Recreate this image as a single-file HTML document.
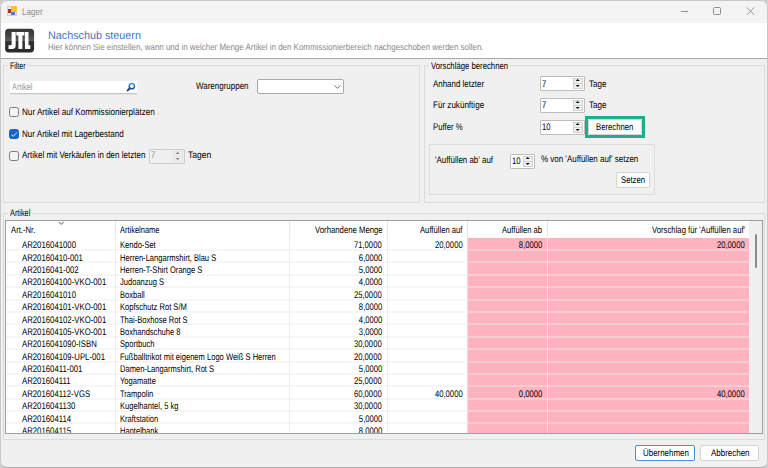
<!DOCTYPE html>
<html><head><meta charset="utf-8"><style>
*{margin:0;padding:0;box-sizing:border-box}
html,body{width:768px;height:468px;overflow:hidden;background:#cdcdcd}
body{font-family:"Liberation Sans",sans-serif;font-size:8.5px;color:#000;position:relative;text-rendering:geometricPrecision}
.a{position:absolute}
.x{position:absolute;white-space:nowrap;line-height:12px;height:12px}
.win{left:0;top:0;width:768px;height:468px;background:#f0f0f0;border-radius:7px;overflow:hidden}
.frame{position:absolute;left:0;top:0;width:768px;height:468px;border:1px solid #c8c8c8;border-bottom-color:#acacac;border-radius:7px}
.win>.a:first-child{}
.gb{position:absolute;border:1px solid #dcdcdc}
.nud{position:absolute;background:#fff;border:1px solid #b9b9b9}
.spin{position:absolute;top:1px;bottom:1px;right:1px;width:10px;background:#ececec;border-left:1px solid #d0d0d0}
.spin i{position:absolute;left:0;right:0;height:50%;}
.spin i.u{top:0;border-bottom:1px solid #d0d0d0}
.spin i.d{bottom:0}
.spin i:after{content:"";position:absolute;left:3px;border-left:2px solid transparent;border-right:2px solid transparent}
.spin i.u:after{top:2px;border-bottom:2px solid #222}
.spin i.d:after{top:2px;border-top:2px solid #222}
.btn{position:absolute;background:#fdfdfd;border:1px solid #d4d4d4;border-radius:2px}
.cb{position:absolute;width:10px;height:10px;border:1px solid #7c7c7c;border-radius:2.5px;background:#f4f4f4}
</style></head><body>
<div class="a win">
<div class="a" style="left:0;top:0;width:768px;height:23px;background:#f3f3f3"></div>
<div class="a" style="left:7px;top:6px;width:10px;height:10px;background:#ececec;border:1px solid #d0d0d0"></div>
<div class="a" style="left:8px;top:9px;width:3px;height:4px;background:#c0272d"></div>
<div class="a" style="left:11px;top:6px;width:6px;height:6px;background:#f2c230;border-radius:1px"></div>
<div class="a" style="left:11px;top:12px;width:4px;height:3px;background:#3f7fe0"></div>
<div class="a" style="left:681px;top:11px;width:7px;height:1px;background:#8e8e8e"></div>
<div class="a" style="left:713px;top:7px;width:8px;height:8px;border:1px solid #8e8e8e;border-radius:1.5px"></div>
<svg class="a" style="left:746px;top:7px" width="9" height="9" viewBox="0 0 9 9"><path d="M0.7 0.4L8.3 8M8.3 0.4L0.7 8" stroke="#929292" stroke-width="0.95"/></svg>
<div class="a" style="left:0;top:23px;width:768px;height:36px;background:#fff;border-bottom:1px solid #a9a9a9"></div>
<svg class="a" style="left:5px;top:28px" width="30" height="25" viewBox="0 0 30 25">
<defs><linearGradient id="g" x1="0" y1="0" x2="0" y2="1"><stop offset="0" stop-color="#353535"/><stop offset="0.3" stop-color="#454545"/><stop offset="0.5" stop-color="#5c5c5c"/><stop offset="0.52" stop-color="#333"/><stop offset="1" stop-color="#2a2a2a"/></linearGradient></defs>
<rect x="0.1" y="0.8" width="29" height="23.6" rx="3.6" fill="url(#g)"/>
<path d="M6.6 3.9H10.7V17.3Q10.7 21.1 7.2 21.1H3.5V17.3H5.8Q6.6 17.3 6.6 16.5Z" fill="#fff"/>
<path d="M11.3 3.9H19.4V7.6H17.4V21.1H13.4V7.6H11.3Z" fill="#fff"/>
<path d="M19.9 3.9H23.5V17.3H25.3V21.1H19.9Z" fill="#fff"/>
</svg>
<div class="gb" style="left:3px;top:65px;width:417px;height:138px"></div>
<div class="a" style="left:8px;top:62px;width:19px;height:6px;background:#f0f0f0"></div>
<div class="a" style="left:10px;top:81px;width:127px;height:12px;background:#fff;box-shadow:0 1px 0 #c6c6c6, 0 2px 0 #e2e2e2"></div>
<svg class="a" style="left:126px;top:82px" width="10" height="10" viewBox="0 0 10 10"><defs><linearGradient id="mg" x1="0" y1="0" x2="0" y2="1"><stop offset="0" stop-color="#3fa0e0"/><stop offset="1" stop-color="#1d4f9e"/></linearGradient></defs><circle cx="5.8" cy="4.2" r="2.6" fill="none" stroke="url(#mg)" stroke-width="1.5"/><path d="M3.9 6.2L1.6 8.5" stroke="#26407f" stroke-width="1.9" stroke-linecap="round"/></svg>
<div class="a" style="left:257px;top:79px;width:87px;height:15px;background:#fff;border:1px solid #a8a8a8;border-radius:2px"></div>
<svg class="a" style="left:334px;top:85px" width="7" height="4" viewBox="0 0 7 4"><path d="M0.5 0.5L3.5 3.2L6.5 0.5" fill="none" stroke="#606060" stroke-width="0.9"/></svg>
<div class="cb" style="left:9px;top:107px"></div>
<div class="cb" style="left:9px;top:129px;background:#1766c6;border-color:#1766c6"></div>
<svg class="a" style="left:10px;top:131px" width="8" height="7" viewBox="0 0 8 7"><path d="M1.5 3.7L3.3 5.3L6.9 1.6" fill="none" stroke="#fff" stroke-width="0.9"/></svg>
<div class="cb" style="left:9px;top:151px"></div>
<div class="a" style="left:149px;top:149px;width:36px;height:15px;background:#f0f0f0;border:1px solid #cccccc;border-radius:1px"></div>
<div class="a" style="left:173px;top:151px;width:10px;height:11px;background:#efefef;border:1px solid #e2e2e2"></div>
<div class="a" style="left:173px;top:156px;width:10px;height:1px;background:#e2e2e2"></div>
<svg class="a" style="left:173px;top:151px" width="10" height="11" viewBox="0 0 10 11"><path d="M2.6 3.1H6.8L4.7 1Z M2.6 6.9H6.8L4.7 9Z" fill="#808080"/></svg>
<div class="gb" style="left:424px;top:65px;width:341px;height:138px"></div>
<div class="a" style="left:429px;top:62px;width:80px;height:6px;background:#f0f0f0"></div>
<div class="a" style="left:540px;top:76px;width:45px;height:15px;background:#fff;border:1px solid #bdbdbd;border-radius:1px"></div>
<div class="a" style="left:573px;top:78px;width:10px;height:11px;background:#efefef;border:1px solid #d2d2d2"></div>
<div class="a" style="left:573px;top:83px;width:10px;height:1px;background:#d2d2d2"></div>
<svg class="a" style="left:573px;top:78px" width="10" height="11" viewBox="0 0 10 11"><path d="M2.6 3.1H6.8L4.7 1Z M2.6 6.9H6.8L4.7 9Z" fill="#111"/></svg>
<div class="a" style="left:540px;top:98px;width:45px;height:15px;background:#fff;border:1px solid #bdbdbd;border-radius:1px"></div>
<div class="a" style="left:573px;top:100px;width:10px;height:11px;background:#efefef;border:1px solid #d2d2d2"></div>
<div class="a" style="left:573px;top:105px;width:10px;height:1px;background:#d2d2d2"></div>
<svg class="a" style="left:573px;top:100px" width="10" height="11" viewBox="0 0 10 11"><path d="M2.6 3.1H6.8L4.7 1Z M2.6 6.9H6.8L4.7 9Z" fill="#111"/></svg>
<div class="a" style="left:540px;top:120px;width:45px;height:15px;background:#fff;border:1px solid #bdbdbd;border-radius:1px"></div>
<div class="a" style="left:573px;top:122px;width:10px;height:11px;background:#efefef;border:1px solid #d2d2d2"></div>
<div class="a" style="left:573px;top:127px;width:10px;height:1px;background:#d2d2d2"></div>
<svg class="a" style="left:573px;top:122px" width="10" height="11" viewBox="0 0 10 11"><path d="M2.6 3.1H6.8L4.7 1Z M2.6 6.9H6.8L4.7 9Z" fill="#111"/></svg>
<div class="a" style="left:585px;top:116px;width:60px;height:22px;border:3px solid #1daf8c"></div>
<div class="btn" style="left:588px;top:119px;width:54px;height:16px"></div>
<div class="gb" style="left:429px;top:144px;width:226px;height:51px"></div>
<div class="a" style="left:510px;top:154px;width:25px;height:15px;background:#fff;border:1px solid #bdbdbd;border-radius:1px"></div>
<div class="a" style="left:523px;top:156px;width:10px;height:11px;background:#efefef;border:1px solid #d2d2d2"></div>
<div class="a" style="left:523px;top:161px;width:10px;height:1px;background:#d2d2d2"></div>
<svg class="a" style="left:523px;top:156px" width="10" height="11" viewBox="0 0 10 11"><path d="M2.6 3.1H6.8L4.7 1Z M2.6 6.9H6.8L4.7 9Z" fill="#111"/></svg>
<div class="btn" style="left:616px;top:172px;width:34px;height:16px"></div>
<div class="gb" style="left:3px;top:213px;width:762px;height:227px"></div>
<div class="a" style="left:8px;top:210px;width:24px;height:6px;background:#f0f0f0"></div>
<div class="a" style="left:5px;top:220px;width:758px;height:214px;background:#fff;border:1px solid #9a9ea5"></div>
<div class="a" style="left:749px;top:221px;width:13px;height:212px;background:#f0f0f0"></div>
<div class="a" style="left:755px;top:234px;width:2px;height:34px;background:#8a8a8a;border-radius:1px"></div>
<div class="a" style="left:115px;top:221px;width:1px;height:17px;background:#e6e6e6"></div>
<div class="a" style="left:289px;top:221px;width:1px;height:17px;background:#e6e6e6"></div>
<div class="a" style="left:387px;top:221px;width:1px;height:17px;background:#e6e6e6"></div>
<div class="a" style="left:467px;top:221px;width:1px;height:17px;background:#e6e6e6"></div>
<div class="a" style="left:547px;top:221px;width:1px;height:17px;background:#e6e6e6"></div>
<svg class="a" style="left:58px;top:221px" width="7" height="5" viewBox="0 0 7 5"><path d="M0.9 1.1L3.3 3.3L5.8 1.1" fill="none" stroke="#808080" stroke-width="1.1"/></svg>
<div class="a" style="left:467px;top:238px;width:282px;height:195px;background:#ffb3bf"></div>
<div class="a" style="left:115px;top:238px;width:1px;height:195px;background:rgba(232,232,232,0.75)"></div>
<div class="a" style="left:289px;top:238px;width:1px;height:195px;background:rgba(232,232,232,0.75)"></div>
<div class="a" style="left:387px;top:238px;width:1px;height:195px;background:rgba(232,232,232,0.75)"></div>
<div class="a" style="left:467px;top:238px;width:1px;height:195px;background:rgba(232,232,232,0.75)"></div>
<div class="a" style="left:547px;top:238px;width:1px;height:195px;background:rgba(232,232,232,0.75)"></div>
<div class="a" style="left:6px;top:249px;width:743px;height:2px;background:rgba(236,236,236,0.45)"></div>
<div class="a" style="left:6px;top:261px;width:743px;height:2px;background:rgba(236,236,236,0.45)"></div>
<div class="a" style="left:6px;top:274px;width:743px;height:2px;background:rgba(236,236,236,0.45)"></div>
<div class="a" style="left:6px;top:286px;width:743px;height:2px;background:rgba(236,236,236,0.45)"></div>
<div class="a" style="left:6px;top:299px;width:743px;height:2px;background:rgba(236,236,236,0.45)"></div>
<div class="a" style="left:6px;top:311px;width:743px;height:2px;background:rgba(236,236,236,0.45)"></div>
<div class="a" style="left:6px;top:323px;width:743px;height:2px;background:rgba(236,236,236,0.45)"></div>
<div class="a" style="left:6px;top:336px;width:743px;height:2px;background:rgba(236,236,236,0.45)"></div>
<div class="a" style="left:6px;top:348px;width:743px;height:2px;background:rgba(236,236,236,0.45)"></div>
<div class="a" style="left:6px;top:361px;width:743px;height:2px;background:rgba(236,236,236,0.45)"></div>
<div class="a" style="left:6px;top:373px;width:743px;height:2px;background:rgba(236,236,236,0.45)"></div>
<div class="a" style="left:6px;top:385px;width:743px;height:2px;background:rgba(236,236,236,0.45)"></div>
<div class="a" style="left:6px;top:398px;width:743px;height:2px;background:rgba(236,236,236,0.45)"></div>
<div class="a" style="left:6px;top:410px;width:743px;height:2px;background:rgba(236,236,236,0.45)"></div>
<div class="a" style="left:6px;top:422px;width:743px;height:2px;background:rgba(236,236,236,0.45)"></div>
<div class="a" style="left:5px;top:433px;width:758px;height:5px;background:#f0f0f0;border-top:1px solid #9a9ea5"></div>
<div class="a" style="left:3px;top:439px;width:762px;height:1px;background:#dcdcdc"></div>
<div class="btn" style="left:635px;top:445px;width:60px;height:16px;border-color:#4a8edb;background:#fff"></div>
<div class="btn" style="left:700px;top:445px;width:59px;height:16px"></div>
<div class="x" style="top:6.94px;font-size:10px;color:#8c8c8c;left:22.10px;transform:scaleX(0.809);transform-origin:0 0;">Lager</div>
<div class="x" style="top:30.09px;font-size:11px;color:#3f76c5;left:47.70px;transform:scaleX(0.980);transform-origin:0 0;">Nachschub steuern</div>
<div class="x" style="top:40.78px;font-size:9px;color:#888888;left:47.70px;transform:scaleX(0.883);transform-origin:0 0;">Hier können Sie einstellen, wann und in welcher Menge Artikel in den Kommissionierbereich nachgeschoben werden sollen.</div>
<div class="x" style="top:61.07px;font-size:9.6px;left:9.70px;transform:scaleX(0.727);transform-origin:0 0;">Filter</div>
<div class="x" style="top:82.37px;font-size:9.6px;color:#9a9a9a;left:12.00px;transform:scaleX(0.769);transform-origin:0 0;">Artikel</div>
<div class="x" style="top:80.87px;font-size:9.6px;left:196.45px;transform:scaleX(0.832);transform-origin:0 0;">Warengruppen</div>
<div class="x" style="top:107.17px;font-size:9.6px;left:22.10px;transform:scaleX(0.847);transform-origin:0 0;">Nur Artikel auf Kommissionierplätzen</div>
<div class="x" style="top:128.87px;font-size:9.6px;left:22.10px;transform:scaleX(0.840);transform-origin:0 0;">Nur Artikel mit Lagerbestand</div>
<div class="x" style="top:150.47px;font-size:9.6px;left:22.10px;transform:scaleX(0.835);transform-origin:0 0;">Artikel mit Verkäufen in den letzten</div>
<div class="x" style="top:150.27px;font-size:9.6px;color:#8e8e8e;left:150.50px;transform:scaleX(0.795);transform-origin:0 0;">7</div>
<div class="x" style="top:150.27px;font-size:9.6px;left:188.20px;transform:scaleX(0.895);transform-origin:0 0;">Tagen</div>
<div class="x" style="top:61.07px;font-size:9.6px;left:430.90px;transform:scaleX(0.807);transform-origin:0 0;">Vorschläge berechnen</div>
<div class="x" style="top:78.77px;font-size:9.6px;left:432.60px;transform:scaleX(0.826);transform-origin:0 0;">Anhand letzter</div>
<div class="x" style="top:78.77px;font-size:9.6px;left:542.20px;transform:scaleX(0.795);transform-origin:0 0;">7</div>
<div class="x" style="top:100.27px;font-size:9.6px;left:432.60px;transform:scaleX(0.841);transform-origin:0 0;">Für zukünftige</div>
<div class="x" style="top:100.27px;font-size:9.6px;left:542.20px;transform:scaleX(0.795);transform-origin:0 0;">7</div>
<div class="x" style="top:122.07px;font-size:9.6px;left:432.60px;transform:scaleX(0.808);transform-origin:0 0;">Puffer %</div>
<div class="x" style="top:122.07px;font-size:9.6px;left:542.20px;transform:scaleX(0.795);transform-origin:0 0;">10</div>
<div class="x" style="top:78.57px;font-size:9.6px;left:588.90px;transform:scaleX(0.841);transform-origin:0 0;">Tage</div>
<div class="x" style="top:99.87px;font-size:9.6px;left:588.90px;transform:scaleX(0.841);transform-origin:0 0;">Tage</div>
<div class="x" style="top:121.77px;font-size:9.6px;left:596.30px;transform:scaleX(0.804);transform-origin:0 0;">Berechnen</div>
<div class="x" style="top:154.57px;font-size:9.6px;left:435.20px;transform:scaleX(0.827);transform-origin:0 0;">'Auffüllen ab' auf</div>
<div class="x" style="top:155.57px;font-size:9.6px;left:511.90px;transform:scaleX(0.806);transform-origin:0 0;">10</div>
<div class="x" style="top:154.47px;font-size:9.6px;left:541.20px;transform:scaleX(0.831);transform-origin:0 0;">% von 'Auffüllen auf' setzen</div>
<div class="x" style="top:174.67px;font-size:9.6px;left:621.40px;transform:scaleX(0.807);transform-origin:0 0;">Setzen</div>
<div class="x" style="top:208.27px;font-size:9.6px;left:9.80px;transform:scaleX(0.762);transform-origin:0 0;">Artikel</div>
<div class="x" style="top:225.27px;font-size:9.6px;left:10.80px;transform:scaleX(0.803);transform-origin:0 0;">Art.-Nr.</div>
<div class="x" style="top:225.27px;font-size:9.6px;left:119.70px;transform:scaleX(0.778);transform-origin:0 0;">Artikelname</div>
<div class="x" style="top:225.27px;font-size:9.6px;left:314.80px;transform:scaleX(0.808);transform-origin:0 0;">Vorhandene Menge</div>
<div class="x" style="top:225.27px;font-size:9.6px;left:420.00px;transform:scaleX(0.799);transform-origin:0 0;">Auffüllen auf</div>
<div class="x" style="top:225.27px;font-size:9.6px;left:502.10px;transform:scaleX(0.794);transform-origin:0 0;">Auffüllen ab</div>
<div class="x" style="top:225.27px;font-size:9.6px;left:652.40px;transform:scaleX(0.806);transform-origin:0 0;">Vorschlag für 'Auffüllen auf'</div>
<div class="x" style="top:448.07px;font-size:9.6px;left:642.80px;transform:scaleX(0.826);transform-origin:0 0;">Übernehmen</div>
<div class="x" style="top:448.07px;font-size:9.6px;left:710.70px;transform:scaleX(0.830);transform-origin:0 0;">Abbrechen</div>
<div class="a" style="left:0;top:0;width:768px;height:433px;overflow:hidden">
<div class="x" style="top:240.27px;font-size:9.6px;left:22.30px;transform:scaleX(0.810);transform-origin:0 0;">AR2016041000</div>
<div class="x" style="top:240.27px;font-size:9.6px;left:120.00px;transform:scaleX(0.788);transform-origin:0 0;">Kendo-Set</div>
<div class="x" style="top:240.27px;font-size:9.6px;left:347.42px;width:34.68px;transform:scaleX(0.800);transform-origin:100% 0;">71,0000</div>
<div class="x" style="top:240.27px;font-size:9.6px;left:427.62px;width:34.68px;transform:scaleX(0.800);transform-origin:100% 0;">20,0000</div>
<div class="x" style="top:240.27px;font-size:9.6px;left:513.06px;width:29.34px;transform:scaleX(0.800);transform-origin:100% 0;">8,0000</div>
<div class="x" style="top:240.27px;font-size:9.6px;left:710.32px;width:34.68px;transform:scaleX(0.800);transform-origin:100% 0;">20,0000</div>
<div class="x" style="top:252.65px;font-size:9.6px;left:22.30px;transform:scaleX(0.810);transform-origin:0 0;">AR20160410-001</div>
<div class="x" style="top:252.65px;font-size:9.6px;left:120.00px;transform:scaleX(0.788);transform-origin:0 0;">Herren-Langarmshirt, Blau S</div>
<div class="x" style="top:252.65px;font-size:9.6px;left:352.76px;width:29.34px;transform:scaleX(0.800);transform-origin:100% 0;">6,0000</div>
<div class="x" style="top:265.03px;font-size:9.6px;left:22.30px;transform:scaleX(0.810);transform-origin:0 0;">AR2016041-002</div>
<div class="x" style="top:265.03px;font-size:9.6px;left:120.00px;transform:scaleX(0.788);transform-origin:0 0;">Herren-T-Shirt Orange S</div>
<div class="x" style="top:265.03px;font-size:9.6px;left:352.76px;width:29.34px;transform:scaleX(0.800);transform-origin:100% 0;">5,0000</div>
<div class="x" style="top:277.41px;font-size:9.6px;left:22.30px;transform:scaleX(0.810);transform-origin:0 0;">AR201604100-VKO-001</div>
<div class="x" style="top:277.41px;font-size:9.6px;left:120.00px;transform:scaleX(0.788);transform-origin:0 0;">Judoanzug S</div>
<div class="x" style="top:277.41px;font-size:9.6px;left:352.76px;width:29.34px;transform:scaleX(0.800);transform-origin:100% 0;">4,0000</div>
<div class="x" style="top:289.79px;font-size:9.6px;left:22.30px;transform:scaleX(0.810);transform-origin:0 0;">AR2016041010</div>
<div class="x" style="top:289.79px;font-size:9.6px;left:120.00px;transform:scaleX(0.788);transform-origin:0 0;">Boxball</div>
<div class="x" style="top:289.79px;font-size:9.6px;left:347.42px;width:34.68px;transform:scaleX(0.800);transform-origin:100% 0;">25,0000</div>
<div class="x" style="top:302.17px;font-size:9.6px;left:22.30px;transform:scaleX(0.810);transform-origin:0 0;">AR201604101-VKO-001</div>
<div class="x" style="top:302.17px;font-size:9.6px;left:120.00px;transform:scaleX(0.788);transform-origin:0 0;">Kopfschutz Rot S/M</div>
<div class="x" style="top:302.17px;font-size:9.6px;left:352.76px;width:29.34px;transform:scaleX(0.800);transform-origin:100% 0;">8,0000</div>
<div class="x" style="top:314.55px;font-size:9.6px;left:22.30px;transform:scaleX(0.810);transform-origin:0 0;">AR201604102-VKO-001</div>
<div class="x" style="top:314.55px;font-size:9.6px;left:120.00px;transform:scaleX(0.788);transform-origin:0 0;">Thai-Boxhose Rot S</div>
<div class="x" style="top:314.55px;font-size:9.6px;left:352.76px;width:29.34px;transform:scaleX(0.800);transform-origin:100% 0;">4,0000</div>
<div class="x" style="top:326.93px;font-size:9.6px;left:22.30px;transform:scaleX(0.810);transform-origin:0 0;">AR201604105-VKO-001</div>
<div class="x" style="top:326.93px;font-size:9.6px;left:120.00px;transform:scaleX(0.788);transform-origin:0 0;">Boxhandschuhe 8</div>
<div class="x" style="top:326.93px;font-size:9.6px;left:352.76px;width:29.34px;transform:scaleX(0.800);transform-origin:100% 0;">3,0000</div>
<div class="x" style="top:339.31px;font-size:9.6px;left:22.30px;transform:scaleX(0.810);transform-origin:0 0;">AR2016041090-ISBN</div>
<div class="x" style="top:339.31px;font-size:9.6px;left:120.00px;transform:scaleX(0.788);transform-origin:0 0;">Sportbuch</div>
<div class="x" style="top:339.31px;font-size:9.6px;left:347.42px;width:34.68px;transform:scaleX(0.800);transform-origin:100% 0;">30,0000</div>
<div class="x" style="top:351.69px;font-size:9.6px;left:22.30px;transform:scaleX(0.810);transform-origin:0 0;">AR201604109-UPL-001</div>
<div class="x" style="top:351.69px;font-size:9.6px;left:120.00px;transform:scaleX(0.788);transform-origin:0 0;">Fußballtrikot mit eigenem Logo Weiß S Herren</div>
<div class="x" style="top:351.69px;font-size:9.6px;left:347.42px;width:34.68px;transform:scaleX(0.800);transform-origin:100% 0;">20,0000</div>
<div class="x" style="top:364.07px;font-size:9.6px;left:22.30px;transform:scaleX(0.810);transform-origin:0 0;">AR20160411-001</div>
<div class="x" style="top:364.07px;font-size:9.6px;left:120.00px;transform:scaleX(0.788);transform-origin:0 0;">Damen-Langarmshirt, Rot S</div>
<div class="x" style="top:364.07px;font-size:9.6px;left:352.76px;width:29.34px;transform:scaleX(0.800);transform-origin:100% 0;">5,0000</div>
<div class="x" style="top:376.45px;font-size:9.6px;left:22.30px;transform:scaleX(0.810);transform-origin:0 0;">AR201604111</div>
<div class="x" style="top:376.45px;font-size:9.6px;left:120.00px;transform:scaleX(0.788);transform-origin:0 0;">Yogamatte</div>
<div class="x" style="top:376.45px;font-size:9.6px;left:347.42px;width:34.68px;transform:scaleX(0.800);transform-origin:100% 0;">25,0000</div>
<div class="x" style="top:388.83px;font-size:9.6px;left:22.30px;transform:scaleX(0.810);transform-origin:0 0;">AR201604112-VGS</div>
<div class="x" style="top:388.83px;font-size:9.6px;left:120.00px;transform:scaleX(0.788);transform-origin:0 0;">Trampolin</div>
<div class="x" style="top:388.83px;font-size:9.6px;left:347.42px;width:34.68px;transform:scaleX(0.800);transform-origin:100% 0;">60,0000</div>
<div class="x" style="top:388.83px;font-size:9.6px;left:427.62px;width:34.68px;transform:scaleX(0.800);transform-origin:100% 0;">40,0000</div>
<div class="x" style="top:388.83px;font-size:9.6px;left:513.06px;width:29.34px;transform:scaleX(0.800);transform-origin:100% 0;">0,0000</div>
<div class="x" style="top:388.83px;font-size:9.6px;left:710.32px;width:34.68px;transform:scaleX(0.800);transform-origin:100% 0;">40,0000</div>
<div class="x" style="top:401.21px;font-size:9.6px;left:22.30px;transform:scaleX(0.810);transform-origin:0 0;">AR2016041130</div>
<div class="x" style="top:401.21px;font-size:9.6px;left:120.00px;transform:scaleX(0.788);transform-origin:0 0;">Kugelhantel, 5 kg</div>
<div class="x" style="top:401.21px;font-size:9.6px;left:347.42px;width:34.68px;transform:scaleX(0.800);transform-origin:100% 0;">30,0000</div>
<div class="x" style="top:413.59px;font-size:9.6px;left:22.30px;transform:scaleX(0.810);transform-origin:0 0;">AR201604114</div>
<div class="x" style="top:413.59px;font-size:9.6px;left:120.00px;transform:scaleX(0.788);transform-origin:0 0;">Kraftstation</div>
<div class="x" style="top:413.59px;font-size:9.6px;left:352.76px;width:29.34px;transform:scaleX(0.800);transform-origin:100% 0;">5,0000</div>
<div class="x" style="top:425.97px;font-size:9.6px;left:22.30px;transform:scaleX(0.810);transform-origin:0 0;">AR201604115</div>
<div class="x" style="top:425.97px;font-size:9.6px;left:120.00px;transform:scaleX(0.788);transform-origin:0 0;">Hantelbank</div>
<div class="x" style="top:425.97px;font-size:9.6px;left:352.76px;width:29.34px;transform:scaleX(0.800);transform-origin:100% 0;">8,0000</div>
</div>
</div><div class="frame"></div></body></html>
